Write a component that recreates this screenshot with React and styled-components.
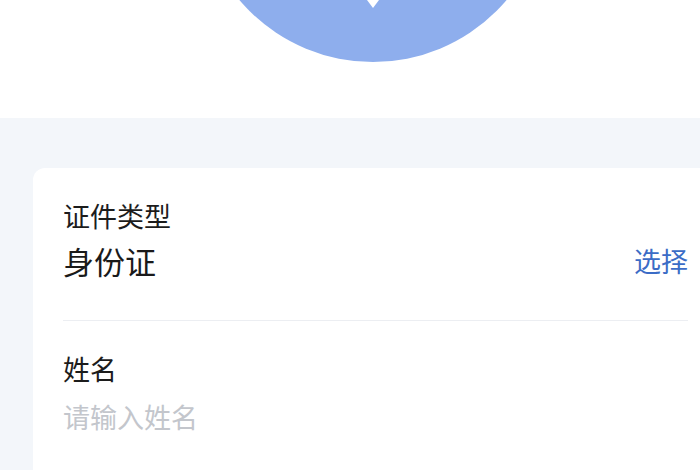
import styled, { createGlobalStyle } from 'styled-components';

const GlobalStyle = createGlobalStyle`
    html, body {
        margin: 0;
        padding: 0;
        background: #f3f6fa;
        overflow: hidden;
    }
    body {
        font-family: "Noto Sans CJK SC", "Noto Sans", sans-serif;
    }
`;

const Page = styled.div`
    width: 700px;
    height: 470px;
    overflow: hidden;
    background: #f3f6fa;
`;

const Header = styled.div`
    height: 118px;
    background: #ffffff;
`;

const Badge = styled.svg`
    display: block;
    margin-left: 193px;
`;

const Card = styled.div`
    margin: 50px 0 0 33px;
    background: #ffffff;
    border-radius: 12px 0 0 0;
    padding: 0 12px 0 30px;
    height: 320px;
`;

const Field = styled.div`
    padding: ${p => (p.last ? '30px 0 28px' : '30px 0 37px')};
    border-bottom: ${p => (p.last ? 'none' : '1px solid #eceef2')};
`;

const Label = styled.div`
    font-size: 27px;
    line-height: 36px;
    color: #1c1c1c;
`;

const Row = styled.div`
    display: flex;
    align-items: center;
    justify-content: space-between;
    margin-top: ${p => p.gap}px;
`;

const Value = styled.div`
    font-size: ${p => (p.placeholder ? 27 : 31)}px;
    line-height: 44px;
    color: ${p => (p.placeholder ? '#c3c6cc' : '#1a1a1a')};
`;

const Action = styled.div`
    font-size: 27px;
    line-height: 44px;
    color: #3b6cc6;
`;

const App = () => {
    return (
        <Page>
            <GlobalStyle />
            <Header>
                <Badge width="360" height="70" viewBox="0 0 360 70">
                    <circle cx="180" cy="-113" r="175" fill="#8eaeed" />
                    <path d="M174 0 L186 0 L180 8 Z" fill="#ffffff" />
                </Badge>
            </Header>
            <Card>
                <Field>
                    <Label>证件类型</Label>
                    <Row gap={5}>
                        <Value>身份证</Value>
                        <Action>选择</Action>
                    </Row>
                </Field>
                <Field last>
                    <Label>姓名</Label>
                    <Row gap={8}>
                        <Value placeholder>请输入姓名</Value>
                    </Row>
                </Field>
            </Card>
        </Page>
    );
};

export default App;
